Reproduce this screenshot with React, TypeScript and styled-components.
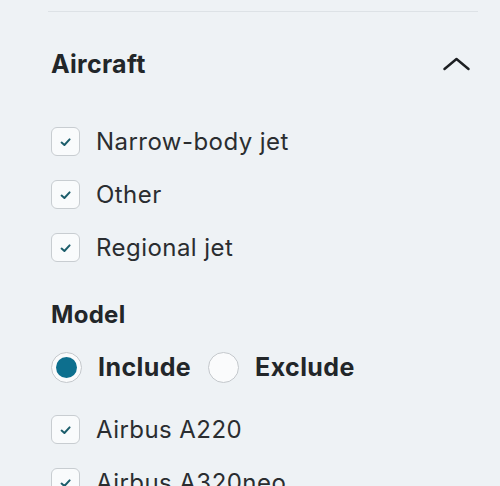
import styled, { createGlobalStyle } from 'styled-components';

const Global = createGlobalStyle`
  html, body {
    margin: 0;
    padding: 0;
    background: #eef2f5;
  }
  body {
    font-family: Inter, "Noto Sans", sans-serif;
    color: #222629;
  }
`;

const Panel = styled.div`
  width: 500px;
  height: 486px;
  overflow: hidden;
  padding: 11px 22px 0 51px;
  box-sizing: border-box;
`;

const Divider = styled.hr`
  border: 0;
  height: 1px;
  background: #dde2e6;
  margin: 0 0 0 -3px;
`;

const Header = styled.div`
  display: flex;
  align-items: center;
  justify-content: space-between;
  height: 103px;
`;

const Title = styled.h3`
  margin: 0;
  font-size: 25px;
  font-weight: 700;
  letter-spacing: 0.3px;
`;

const Toggle = styled.button`
  border: 0;
  background: none;
  padding: 0 3px 0 0;
  width: 40px;
  height: 40px;
  display: flex;
  align-items: center;
  justify-content: center;
  color: #1c1f22;
`;

const List = styled.div`
  display: flex;
  flex-direction: column;
`;

const Row = styled.label`
  display: flex;
  align-items: center;
  gap: 16px;
  height: 53px;
  font-size: 24px;
  letter-spacing: 0.45px;
  color: #2a2d30;
`;

const Box = styled.span`
  width: 29px;
  height: 29px;
  box-sizing: border-box;
  border: 1.5px solid #c8cdd1;
  border-radius: 6px;
  background: #f9fbfc;
  display: flex;
  align-items: center;
  justify-content: center;
  color: #1b5d6b;
`;

const SubTitle = styled.h4`
  margin: 0;
  font-size: 24px;
  font-weight: 700;
  letter-spacing: 0.3px;
  height: 34px;
  display: flex;
  align-items: center;
  margin-top: 23px;
`;

const RadioGroup = styled.div`
  display: flex;
  align-items: center;
  height: 72px;
  gap: 17px;
`;

const RadioOption = styled.label`
  display: flex;
  align-items: center;
  gap: 16px;
  font-size: 25px;
  font-weight: 700;
  letter-spacing: 0.4px;
`;

const Radio = styled.span<{ checked?: boolean }>`
  width: 31px;
  height: 31px;
  box-sizing: border-box;
  border-radius: 50%;
  border: 1.5px solid #c4c8cc;
  background: #fafbfc;
  display: flex;
  align-items: center;
  justify-content: center;
  &::after {
    content: '';
    width: 21px;
    height: 21px;
    border-radius: 50%;
    background: ${({ checked }) => (checked ? '#0d6f8e' : 'transparent')};
  }
`;

const Check = () => (
  <svg width="16" height="16" viewBox="0 0 16 16" fill="none">
    <path d="M3.6 8.6 L6.4 11 L11.6 5.4" stroke="currentColor" strokeWidth="2" strokeLinecap="round" strokeLinejoin="round" />
  </svg>
);

const Checkbox = ({ label }: { label: string }) => (
  <Row>
    <Box>
      <Check />
    </Box>
    {label}
  </Row>
);

export default function App() {
  return (
    <>
      <Global />
      <Panel>
        <Divider />
        <Header>
          <Title>Aircraft</Title>
          <Toggle aria-label="Collapse">
            <svg width="27" height="14" viewBox="0 0 27 14" fill="none">
              <path d="M1.5 12 L13.5 2 L25.5 12" stroke="currentColor" strokeWidth="2.4" strokeLinecap="round" strokeLinejoin="round" />
            </svg>
          </Toggle>
        </Header>
        <List>
          <Checkbox label="Narrow-body jet" />
          <Checkbox label="Other" />
          <Checkbox label="Regional jet" />
        </List>
        <SubTitle>Model</SubTitle>
        <RadioGroup>
          <RadioOption>
            <Radio checked />
            Include
          </RadioOption>
          <RadioOption>
            <Radio />
            Exclude
          </RadioOption>
        </RadioGroup>
        <List>
          <Checkbox label="Airbus A220" />
          <Checkbox label="Airbus A320neo" />
        </List>
      </Panel>
    </>
  );
}
